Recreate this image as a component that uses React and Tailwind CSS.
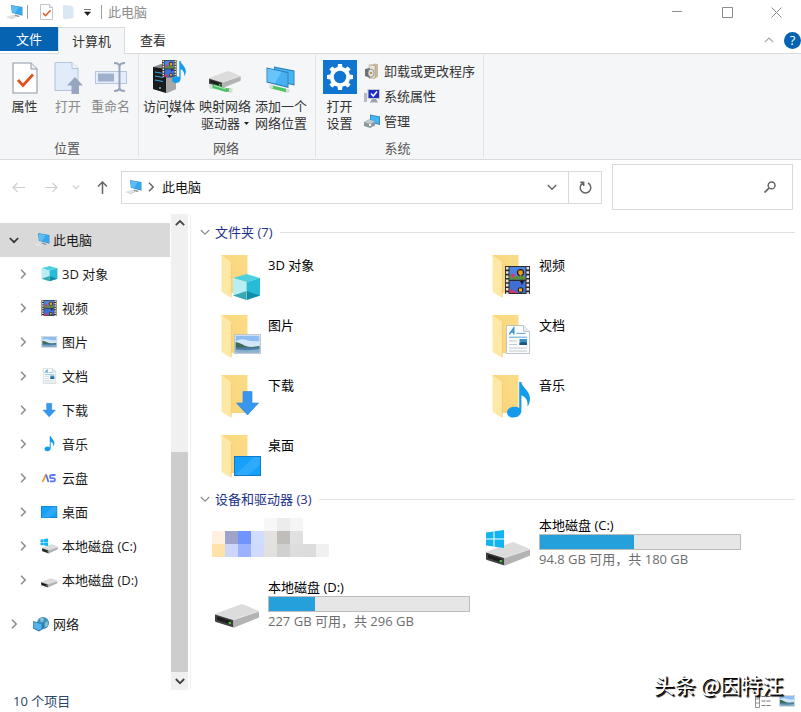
import React from 'react';

/* ---------- small glyphs ---------- */

const Chevron = ({ d, color = '#8a8a8a', width = 1.5 }) => (
  <svg className="w-2.5 h-2.5 shrink-0" viewBox="0 0 10 10" fill="none" stroke={color} strokeWidth={width}>
    <path d={d} />
  </svg>
);

const RIGHT = 'M3 .8L7.2 5L3 9.2';
const DOWN = 'M.8 3L5 7.2L9.2 3';
const UP = 'M.8 7.2L5 3L9.2 7.2';

const Caret = () => (
  <svg className="w-[5px] h-[3px] shrink-0" viewBox="0 0 5 3">
    <path d="M0 0h5L2.5 3z" fill="#222" />
  </svg>
);

/* ---------- icons ---------- */

const ComputerIcon = ({ className }) => (
  <svg className={className} viewBox="0 0 18 16">
    <path d="M5 1l11.500 2v8.800L5.800 8.800z" fill="#4a8dbd" />
    <path d="M5.600 1.800l10.300 1.800v7.200L6.300 8.200z" fill="#35a9ef" />
    <path d="M5.600 1.800l7 1.200-3.500 5.900-2.800-.7z" fill="#5cbdf7" />
    <path d="M9 10.600l5 1.300-1.800 1-3.800-1z" fill="#7f95a8" />
    <path d="M0 13l6.500-2 5 1.600L6 15.200z" fill="#d3d7da" />
    <path d="M2 13.200l5-1.400M4 14l5-1.600" stroke="#f4f5f6" strokeWidth=".5" />
  </svg>
);

const CubeShape = () => (
  <>
    <path d="M0 4L13.500 0L27 4L13.500 8z" fill="#4fd0de" />
    <path d="M0 4L13.500 8V26L0 21.500z" fill="#b9eff3" />
    <path d="M27 4L13.500 8V26L27 21.500z" fill="#27bbd8" />
    <path d="M0 21.500L13.500 17V26z" fill="#3aa9b4" />
    <path d="M27 21.500L13.500 17V26z" fill="#128da6" />
    <path d="M13.500 8V26" stroke="#8fe3ea" strokeWidth=".6" />
  </>
);

const FilmShape = () => (
  <>
    <rect width="25" height="28" fill="#2e2a2a" />
    <path d="M2.2 1v27M22.8 1v27" stroke="#e8e4dc" strokeWidth="2.6" strokeDasharray="2.6 1.6" />
    <rect x="4.5" y="1" width="16" height="12.5" fill="#4f83e2" />
    <rect x="4.5" y="15" width="16" height="12" fill="#3f6fd4" />
    <path d="M4.5 13.5V9l3-1 3 3 4-2 6 2v2.5z" fill="#5f8f34" />
    <circle cx="15.5" cy="6.5" r="3.6" fill="#241a14" />
    <path d="M13.5 4.5h4l.4 3-2.3 2.5-2.3-2.5z" fill="#f2a11c" />
    <circle cx="8" cy="9.5" r="1.9" fill="#d6377c" />
    <path d="M15 15h4l-2 4z" fill="#1a1a24" />
    <path d="M4.5 27v-4l5 1.6 3 2.4z" fill="#c93a72" />
    <circle cx="15.5" cy="24" r="2.8" fill="#2b2018" />
    <path d="M14 22.5h3v3h-3z" fill="#f3b626" />
  </>
);

const PictureShape = () => (
  <>
    <rect x=".4" y=".4" width="26.2" height="19.2" fill="#f4f6f8" stroke="#b5bcc4" strokeWidth=".8" />
    <rect x="1.6" y="1.6" width="23.8" height="16.8" fill="#8dbdf1" />
    <path d="M1.6 7q6-3 11-1t12.8 1v6H1.6z" fill="#d3e7f8" />
    <path d="M1.6 8q4 .5 7 2.500t9 2.500l7.800-1v2.4H1.6z" fill="#3d6b57" />
    <path d="M1.6 13.5h23.8v4.9H1.6z" fill="#4b7fa9" />
    <path d="M1.6 15.5q12 1.6 23.8-.5v3.4H1.6z" fill="#8ab3cb" />
  </>
);

const DocShape = () => (
  <>
    <path d="M.5 .5h17l6 6v22H.5z" fill="#fbfcfd" stroke="#b7bdc3" strokeWidth=".9" />
    <path d="M17.5 .5v6h6" fill="#e6ebef" stroke="#b7bdc3" strokeWidth=".8" />
    <path d="M3.2 9.4L7.8 3v6.4M5 7h3" fill="none" stroke="#2e8fc4" strokeWidth="1.3" />
    <path d="M10.5 8.4h9M3 12.2h18" stroke="#5aa9d2" strokeWidth="1" />
    <path d="M3 16h8M3 19.5h8M3 23h18M3 26h18" stroke="#b9c4cc" strokeWidth=".9" />
    <rect x="13.5" y="14" width="7.5" height="6" fill="#3a91c5" />
    <path d="M13.5 18q4-2 7.5 0v2h-7.5z" fill="#1f567a" />
  </>
);

const ArrowShape = () => (
  <path d="M7 .5h9V12h6.5L11.5 24L.5 12H7z" fill="#3797ee" stroke="#2b80cf" strokeWidth=".6" />
);

const NoteShape = () => (
  <path
    d="M12.2 0h2.2c.4 5 8.6 9 8.6 16.5 0 3.2-1 6-2.6 8.2.8-5.6-1.2-9.6-6-11.4V28.500c0 4.200-3.600 7-8 7S0 33.200 0 30.300s3-5.600 7.200-5.600c2 0 3.800.5 5 1.300z"
    fill="#149bec"
  />
);

const DesktopShape = () => (
  <>
    <rect width="27" height="20" fill="#1179c8" />
    <rect x="1" y="1" width="25" height="18" fill="#15a0fa" />
    <path d="M1 19L20 1h6v8L14 19z" fill="#3db0fb" opacity=".6" />
  </>
);

const DriveShape = () => (
  <>
    <path d="M1 10.500Q0 10 1 9.500L25.500 .5Q27 0 28.500 .5L43 6.500Q44.500 7.200 43 8L19 16z" fill="#dcdcdc" />
    <path d="M0 10l18.500 5.700v7.800L1 18Q0 17.600 0 16.500z" fill="#404040" />
    <path d="M2 12.500l14 4.600v3.400L2 16z" fill="#1d1d1d" />
    <path d="M18.500 15.700L44 7.200V12.500Q44 13.500 43 14L20 23.300Q19 23.800 18.500 23.500z" fill="#b3b3b3" />
    <path d="M0 10l18.500 5.700L44 7.200" fill="none" stroke="#ededed" strokeWidth=".8" />
    <circle cx="14.800" cy="19" r="1.200" fill="#3fd34c" />
  </>
);

const WindowsShape = () => (
  <path d="M0 2.500l7.500-1V8.500H0zM8.500 1.300L18 0v8.500H8.500zM0 9.500h7.500v7l-7.500-1zM8.500 9.500H18V18l-9.500-1.300z" fill="#10b4f1" />
);

const Folder = ({ children }) => (
  <svg className="w-[47px] h-[46px] shrink-0" viewBox="0 0 47 46">
    <defs>
      <linearGradient id="folderBack" x1="0" y1="1" x2="1" y2="0">
        <stop offset="0" stopColor="#f6d377" />
        <stop offset="1" stopColor="#fbdc87" />
      </linearGradient>
    </defs>
    <path d="M7.500 1H33.500V39H14z" fill="url(#folderBack)" />
    <path d="M7.500 1L16.300 7.500Q17.300 8.300 17.300 10V44L8.500 38.500Q7.500 37.800 7.500 36.500z" fill="#fee8a6" />
    <path d="M17.300 10V43" stroke="#e9c768" strokeWidth=".6" />
    {children}
  </svg>
);

const PropertiesIcon = ({ className }) => (
  <svg className={className} viewBox="0 0 26 32">
    <path d="M1 1h18l6 6v24H1z" fill="#fff" stroke="#8d99a8" strokeWidth="1.100" />
    <path d="M19 1v6h6" fill="#eef1f5" stroke="#8d99a8" strokeWidth="1" />
    <path d="M6 18l5 5.500L21 12.500" fill="none" stroke="#e0521d" strokeWidth="2.800" />
  </svg>
);

const OpenIcon = () => (
  <svg className="w-[30px] h-[34px]" viewBox="0 0 30 34">
    <path d="M2 2.500h17l6 6v22H2z" fill="#e1ebf9" stroke="#b4c3da" />
    <path d="M19 2.500v6h6" fill="#f2f6fb" stroke="#b4c3da" />
    <path d="M22 17L30 25.500H26V34h-7.500v-8.500h-4.500z" fill="#98a5c0" />
  </svg>
);

const RenameIcon = () => (
  <svg className="w-8 h-[34px]" viewBox="0 0 32 34">
    <rect x=".5" y="11.500" width="31" height="12" fill="#e4edf9" stroke="#b7c6dd" />
    <rect x="3" y="13.500" width="16" height="8" fill="#a0afcd" />
    <path d="M19 3q5 0 5.500 3 .5-3 5.500-3M24.500 5.500v23M19 31q5 0 5.500-3 .5 3 5.500 3" fill="none" stroke="#97a3ba" strokeWidth="2" />
  </svg>
);

const MediaIcon = () => (
  <svg className="w-[34px] h-[34px]" viewBox="0 0 34 34">
    <path d="M1 7l8-3h15v25l-9 4-14-4z" fill="#8b8d90" />
    <path d="M1 7l13 2v24L1 29z" fill="#191b1e" />
    <path d="M14 9l10-4v24l-10 4z" fill="#a6a8aa" />
    <path d="M3 12l8 1.500M3 16l8 1.500M3 20l8 1.500" stroke="#3aa4dc" strokeWidth="1.200" />
    <circle cx="8" cy="28" r="1" fill="#4cc4f5" />
    <g transform="translate(10 0) scale(.58 .62)"><FilmShape /></g>
    <g transform="translate(20 1) scale(.6 .62)"><NoteShape /></g>
  </svg>
);

const MapDriveIcon = () => (
  <svg className="w-[34px] h-[34px]" viewBox="0 0 34 34">
    <g transform="translate(1 11) scale(.72)"><DriveShape /></g>
    <path d="M2 25l4-.5 12 3.500 5 .5v3l-5 .5L6 28.500l-4-.5z" fill="#4cc163" />
    <path d="M6 25.500l12 3.500" stroke="#a4e6ae" strokeWidth="1.200" />
    <path d="M1.500 24.500h3v4h-3zM21 28.500h3.500v4H21z" fill="#d5dbd6" />
  </svg>
);

const AddPlaceIcon = () => (
  <svg className="w-[34px] h-[34px]" viewBox="0 0 34 34">
    <path d="M10 6.500l20.500 4v15L10 21z" fill="#2a7fba" />
    <path d="M11 7.800l18.600 3.600v12.800L11 20z" fill="#47b4f3" />
    <path d="M2.500 7.500l22 4.500v16l-22-5.500z" fill="#2f82ba" />
    <path d="M3.500 8.800l20 4.100v13.700l-20-5z" fill="#46b0f3" />
    <path d="M3.500 8.800l14 2.900-6.500 11.800-7.500-1.900z" fill="#69c5f8" />
    <path d="M7 25l16 4v3.500L7 28.500z" fill="#4dc763" />
    <path d="M5.500 24.500H9v4H5.500zM22 29h3.500v3.500H22z" fill="#d5dbd6" />
  </svg>
);

const SettingsIcon = () => (
  <svg className="w-[34px] h-[34px] bg-[#0f75d1]" viewBox="0 0 34 34">
    <g transform="translate(17 17)">
      <circle r="8.200" fill="none" stroke="#fff" strokeWidth="4" />
      {[0, 45, 90, 135, 180, 225, 270, 315].map((angle) => (
        <path key={angle} transform={`rotate(${angle})`} d="M-2.500 -9.500L-2 -13h4l.5 3.500z" fill="#fff" />
      ))}
    </g>
  </svg>
);

const UninstallIcon = () => (
  <svg className="w-4 h-4" viewBox="0 0 16 16">
    <path d="M5 2l7-1.500 2 1v12l-3 2H5z" fill="#c9b8a0" />
    <path d="M5 2l6 .5V15H5z" fill="#eee5d5" stroke="#a08f78" strokeWidth=".5" />
    <path d="M1 6l5-1v10l-5-2z" fill="#6e7276" />
    <ellipse cx="7" cy="10" rx="3" ry="4" fill="#e3e7ea" stroke="#777" strokeWidth=".7" />
    <circle cx="7" cy="10" r="1.200" fill="#c29033" />
  </svg>
);

const SystemIcon = () => (
  <svg className="w-4 h-4" viewBox="0 0 16 16">
    <path d="M0 5h3v9H0z" fill="#b6bcc6" />
    <rect x="3.500" y="1" width="12.500" height="10" fill="#c6cdd9" />
    <rect x="4.500" y="2" width="10.500" height="8" fill="#1c2fc0" />
    <path d="M7 5.500l2.300 2.500L13 3.500" fill="none" stroke="#fff" strokeWidth="1.500" />
    <path d="M8 11h4l2 3.500H6z" fill="#9ba3b0" />
  </svg>
);

const ManageIcon = () => (
  <svg className="w-4 h-4" viewBox="0 0 16 16">
    <path d="M6 1.500l10 2v8.500L6 9.500z" fill="#3982b8" />
    <path d="M6.800 2.500l8.400 1.700v6.600L6.800 8.800z" fill="#40b6f5" />
    <path d="M0 9l5-2.500 6 2v4L6 15l-6-2z" fill="#8e999f" />
    <path d="M0 9l5-2.500 6 2L6 11z" fill="#c1cacd" />
    <path d="M5 11h2v2H5z" fill="#f0f3f4" />
  </svg>
);

const NetworkIcon = () => (
  <svg className="w-[18px] h-4" viewBox="0 0 18 16">
    <circle cx="11" cy="7" r="6" fill="#3f93bd" />
    <path d="M8 2.500l3-1 1 3-3 2zM13 7l3-2-.5 5-2.500 1z" fill="#8cc5cf" />
    <path d="M1 5l9 2.500 2-1v6L7 15.500l-6-3z" fill="#2b7fc0" />
    <path d="M1.500 6l8 2.200v5L6.500 14l-5-2.500z" fill="#55b4ea" />
  </svg>
);

const CloudIcon = () => (
  <svg className="w-[18px] h-4" viewBox="0 0 18 16" fill="none" strokeWidth="1.800">
    <path d="M2.500 12L6 4.500" stroke="#f0a53c" />
    <path d="M6 4.500L8.500 12" stroke="#5a6ff0" />
    <path d="M15.500 5H12Q10 5 10 6.700T12 8.200H13.500Q15 8.200 15 9.800T13.500 11.300H10" stroke="#5a78f5" />
  </svg>
);

/* Fits one of the large shapes into a tree row */
const TreeIcon = ({ transform, children }) => (
  <svg className="w-[18px] h-4" viewBox="0 0 18 16">
    <g transform={transform}>{children}</g>
  </svg>
);

/* ---------- data ---------- */

const treeItems = [
  { label: '3D 对象', icon: <TreeIcon transform="translate(1.500 0) scale(.59)"><CubeShape /></TreeIcon> },
  { label: '视频', icon: <TreeIcon transform="translate(1.500 0) scale(.6 .57)"><FilmShape /></TreeIcon> },
  { label: '图片', icon: <TreeIcon transform="translate(1.500 2) scale(.58)"><PictureShape /></TreeIcon> },
  { label: '文档', icon: <TreeIcon transform="translate(3 0) scale(.54)"><DocShape /></TreeIcon> },
  { label: '下载', icon: <TreeIcon transform="translate(2.500 1) scale(.58)"><ArrowShape /></TreeIcon> },
  { label: '音乐', icon: <TreeIcon transform="translate(4.500 0) scale(.43)"><NoteShape /></TreeIcon> },
  { label: '云盘', icon: <CloudIcon /> },
  { label: '桌面', icon: <TreeIcon transform="translate(1 2) scale(.6)"><DesktopShape /></TreeIcon> },
  {
    label: '本地磁盘 (C:)',
    icon: (
      <svg className="w-[18px] h-4" viewBox="0 0 18 16">
        <g transform="translate(2 6) scale(.36 .4)"><DriveShape /></g>
        <g transform="translate(.5 .5) scale(.42)"><WindowsShape /></g>
      </svg>
    ),
  },
  { label: '本地磁盘 (D:)', icon: <TreeIcon transform="translate(1 6) scale(.37 .4)"><DriveShape /></TreeIcon> },
];

const folders = [
  { label: '3D 对象', art: <g transform="translate(19 20)"><CubeShape /></g> },
  { label: '视频', art: <g transform="translate(20 12)"><FilmShape /></g> },
  { label: '图片', art: <g transform="translate(20 20)"><PictureShape /></g> },
  { label: '文档', art: <g transform="translate(21 11)"><DocShape /></g> },
  { label: '下载', art: <g transform="translate(22 17)"><ArrowShape /></g> },
  { label: '音乐', art: <g transform="translate(22 8)"><NoteShape /></g> },
  { label: '桌面', art: <g transform="translate(20 22)"><DesktopShape /></g> },
];

const drives = [
  { label: '本地磁盘 (C:)', used: 47, info: '94.8 GB 可用，共 180 GB', system: true },
  { label: '本地磁盘 (D:)', used: 23, info: '227 GB 可用，共 296 GB', system: false },
];

// Blurred-out device: [column, row, colour]
const mosaic = [
  [4, 0, '#f7f7f7'], [5, 0, '#ececec'], [6, 0, '#f5f5f5'],
  [0, 1, '#fff0e2'], [1, 1, '#9fa3cc'], [2, 1, '#7094fd'], [3, 1, '#d1ddff'], [4, 1, '#e3e2df'], [5, 1, '#c1bdba'], [6, 1, '#e0e0e1'],
  [0, 2, '#ffe1aa'], [1, 2, '#cdd6fa'], [2, 2, '#9db2ff'], [3, 2, '#d0dafc'], [4, 2, '#e3e1de'], [5, 2, '#d0d0d0'], [6, 2, '#dddddd'], [7, 2, '#dcdcdc'], [8, 2, '#f0f0f0'],
];

/* ---------- parts ---------- */

const TitleBar = () => (
  <header className="flex items-center h-[27px] pb-[3px] pl-1.5 text-[#8c8c8c]">
    <ComputerIcon className="w-[18px] h-4" />
    <span className="w-px h-3.5 bg-gray-400 ml-[3px]" />
    <button aria-label="属性" className="ml-3"><PropertiesIcon className="w-[13px] h-4" /></button>
    <button aria-label="新建文件夹" className="ml-2.5">
      <svg className="w-[11px] h-4" viewBox="0 0 11 16">
        <path d="M0 1l8 .5 2.500 2V14L2 15.500 0 14z" fill="#dce7f4" />
      </svg>
    </button>
    <button aria-label="自定义快速访问工具栏" className="ml-2.5">
      <svg className="w-[7px] h-[7px]" viewBox="0 0 7 7"><path d="M0 .5h7M.5 3h6l-3 3.500z" fill="#222" stroke="#222" strokeWidth=".6" /></svg>
    </button>
    <span className="w-px h-3.5 bg-gray-400 ml-2.5" />
    <h1 className="ml-1.5">此电脑</h1>
    <div className="ml-auto flex items-center">
      <button aria-label="最小化" className="w-[50px] flex justify-center">
        <svg className="w-2.5 h-2.5" viewBox="0 0 10 10" stroke="#8c8c8c"><path d="M0 4.500h10" /></svg>
      </button>
      <button aria-label="最大化" className="w-[50px] flex justify-center">
        <svg className="w-[11px] h-[11px]" viewBox="0 0 11 11" fill="none" stroke="#8c8c8c"><path d="M.5 .5h10v10H.5z" /></svg>
      </button>
      <button aria-label="关闭" className="w-[49px] flex justify-center">
        <svg className="w-[11px] h-[11px]" viewBox="0 0 11 11" stroke="#8c8c8c"><path d="M.5 .5l10 10M10.500 .5l-10 10" /></svg>
      </button>
    </div>
  </header>
);

const RibbonTabs = () => (
  <nav className="flex h-[27px] border-b border-[#dadbdc] text-[#333]">
    <button className="w-[58px] h-6 bg-[#0563b1] text-white">文件</button>
    <button className="w-[67px] h-[27px] bg-[#f5f6f7] border border-b-0 border-[#dadbdc]">计算机</button>
    <button className="w-14">查看</button>
    <div className="ml-auto flex items-center gap-2.5">
      <button aria-label="折叠功能区"><Chevron d={UP} color="#a3a3a3" width={1.2} /></button>
      <button className="w-[17px] h-[17px] rounded-full bg-[#0563b1] text-white leading-4">?</button>
    </div>
  </nav>
);

const RibbonButton = ({ icon, lines, disabled, caret, className }) => (
  <button disabled={disabled} className={`flex flex-col items-center leading-[17px] whitespace-nowrap ${disabled ? 'text-[#8b8b8b]' : ''} ${className}`}>
    <span className="h-9 mb-0.5">{icon}</span>
    {lines.map((line, i) => (
      <span key={line} className="flex items-center gap-1">
        {line}
        {caret === 'side' && i === lines.length - 1 && <Caret />}
      </span>
    ))}
    {caret === 'below' && <Caret />}
  </button>
);

const RibbonGroup = ({ title, className, children }) => (
  <section className={`flex flex-col border-r border-[#e2e3e4] ${className}`}>
    <div className="flex flex-1 items-start pt-1.5">{children}</div>
    <h2 className="text-center text-[#555] leading-[18px] pr-1">{title}</h2>
  </section>
);

const Ribbon = () => (
  <div className="flex h-[106px] bg-[#f5f6f7] border-b border-[#dadbdc] text-[#333] pb-0.5">
    <RibbonGroup title="位置" className="w-[139px]">
      <RibbonButton icon={<PropertiesIcon className="w-[26px] h-8 mt-0.5" />} lines={['属性']} className="w-[49px]" />
      <RibbonButton icon={<OpenIcon />} lines={['打开']} disabled className="w-[38px]" />
      <RibbonButton icon={<RenameIcon />} lines={['重命名']} disabled className="w-[47px]" />
    </RibbonGroup>
    <RibbonGroup title="网络" className="w-[177px] pl-0.5">
      <RibbonButton icon={<MediaIcon />} lines={['访问媒体']} caret="below" className="w-[56px]" />
      <RibbonButton icon={<MapDriveIcon />} lines={['映射网络', '驱动器']} caret="side" className="w-[56px]" />
      <RibbonButton icon={<AddPlaceIcon />} lines={['添加一个', '网络位置']} className="w-[56px]" />
    </RibbonGroup>
    <RibbonGroup title="系统" className="w-[168px]">
      <RibbonButton icon={<SettingsIcon />} lines={['打开', '设置']} className="w-[47px]" />
      <div className="flex flex-col items-start gap-[7px] leading-[18px] pt-0.5 pl-px">
        <button className="flex items-center gap-1"><UninstallIcon />卸载或更改程序</button>
        <button className="flex items-center gap-1"><SystemIcon />系统属性</button>
        <button className="flex items-center gap-1"><ManageIcon />管理</button>
      </div>
    </RibbonGroup>
  </div>
);

const AddressRow = () => (
  <div className="flex items-center h-[54px] pl-3 pr-2">
    <button aria-label="后退">
      <svg className="w-[13px] h-[13px]" viewBox="0 0 13 13" fill="none" stroke="#cfcfcf" strokeWidth="1.200"><path d="M13 6.500H1M5.500 2L1 6.500 5.500 11" /></svg>
    </button>
    <button aria-label="前进" className="ml-5">
      <svg className="w-[13px] h-[13px]" viewBox="0 0 13 13" fill="none" stroke="#cfcfcf" strokeWidth="1.200"><path d="M0 6.500h12M7.500 2L12 6.500 7.500 11" /></svg>
    </button>
    <button aria-label="最近位置" className="ml-3.5">
      <svg className="w-2 h-2" viewBox="0 0 10 10" fill="none" stroke="#cfcfcf" strokeWidth="1.500"><path d={DOWN} /></svg>
    </button>
    <button aria-label="向上" className="ml-4">
      <svg className="w-[13px] h-[13px]" viewBox="0 0 13 13" fill="none" stroke="#666" strokeWidth="1.500"><path d="M6.500 13V1M2 5.500L6.500 1 11 5.500" /></svg>
    </button>
    <div className="ml-3 flex-1 h-[33px] flex items-center border border-[#d9d9d9] pl-[3px]">
      <ComputerIcon className="w-[18px] h-4" />
      <span className="ml-[3px]"><Chevron d={RIGHT} color="#666" /></span>
      <span className="ml-1.5 text-[#111]">此电脑</span>
      <button aria-label="展开地址" className="ml-auto mr-[11px]"><Chevron d={DOWN} color="#666" /></button>
      <button aria-label="刷新" className="w-[33px] h-full border-l border-[#d9d9d9] flex items-center justify-center">
        <svg className="w-[13px] h-[13px]" viewBox="0 0 13 13" fill="none" stroke="#666" strokeWidth="1.500">
          <path d="M9 2A5.300 5.300 0 1 1 4 2M1.200 1.300H4.700V5" />
        </svg>
      </button>
    </div>
    <div className="ml-2.5 w-[181px] h-[46px] flex items-center border border-[#d9d9d9] pr-4">
      <input type="text" aria-label="搜索此电脑" className="flex-1 min-w-0 h-full px-2 outline-none" />
      <svg className="w-3 h-3" viewBox="0 0 12 12" fill="none" stroke="#666" strokeWidth="1.500">
        <circle cx="7.600" cy="4.400" r="3.400" />
        <path d="M5.200 6.800L.5 11.500" strokeWidth="1.800" />
      </svg>
    </div>
  </div>
);

const Sidebar = () => (
  <aside className="flex w-[191px] border-r border-[#f0f0f0] text-[#1a1a1a]">
    <ul className="w-[170px] pt-[9px]">
      <li>
        <button className="flex items-center w-full h-[34px] pl-[9px] bg-[#d9d9d9]">
          <Chevron d={DOWN} color="#333" width={1.7} />
          <ComputerIcon className="w-[18px] h-4 ml-3.5 mr-0.5" />
          此电脑
        </button>
        <ul>
          {treeItems.map((item) => (
            <li key={item.label}>
              <button className="flex items-center w-full h-[34px] pl-[18px]">
                <Chevron d={RIGHT} />
                <span className="ml-3 mr-1">{item.icon}</span>
                {item.label}
              </button>
            </li>
          ))}
        </ul>
      </li>
      <li>
        <button className="flex items-center w-full h-[34px] pl-[9px] mt-2.5">
          <Chevron d={RIGHT} />
          <span className="ml-[13px] mr-[3px]"><NetworkIcon /></span>
          网络
        </button>
      </li>
    </ul>
    <div className="flex flex-col w-[17px] ml-px bg-[#f0f0f0]">
      <button aria-label="向上滚动" className="h-[18px] flex items-center justify-center"><Chevron d={UP} color="#444" width={1.8} /></button>
      <div className="flex-1 flex flex-col justify-end">
        <div className="h-1/2 bg-[#cdcdcd]" />
      </div>
      <button aria-label="向下滚动" className="h-[18px] flex items-center justify-center"><Chevron d={DOWN} color="#444" width={1.8} /></button>
    </div>
  </aside>
);

const SectionHeader = ({ children }) => (
  <div className="flex items-center h-[18px] pr-1.5">
    <button className="flex items-center gap-[5px] text-[#1e3287]">
      <Chevron d={DOWN} width={1.1} />
      {children}
    </button>
    <span className="flex-1 h-px bg-[#e2e2e2] ml-2" />
  </div>
);

const DriveTile = ({ drive }) => (
  <div className="flex h-[62px] pt-2 gap-2">
    <svg className="w-[46px] h-[50px] shrink-0" viewBox="0 0 46 50">
      <g transform="translate(1 26)"><DriveShape /></g>
      {drive.system && <g transform="translate(1 14)"><WindowsShape /></g>}
    </svg>
    <div className="w-[202px] leading-[18px]">
      <p>{drive.label}</p>
      <div className="h-4 bg-[#e6e6e6] border border-[#bcbcbc]">
        <div className="h-full bg-[#26a0da]" style={{ width: `${drive.used}%` }} />
      </div>
      <p className="text-[#6d6d6d]">{drive.info}</p>
    </div>
  </div>
);

const Content = () => (
  <main className="flex-1 min-w-0 pt-[9px] pl-[9px] text-black">
    <SectionHeader>文件夹 (7)</SectionHeader>
    <div className="grid grid-cols-[repeat(auto-fill,271px)] pl-3.5 pt-1.5 pb-[3px]">
      {folders.map((folder) => (
        <div key={folder.label} className="flex h-[60px] pt-[7px] gap-[7px]">
          <Folder>{folder.art}</Folder>
          <span className="leading-[18px] pt-0.5">{folder.label}</span>
        </div>
      ))}
    </div>
    <SectionHeader>设备和驱动器 (3)</SectionHeader>
    <div className="grid grid-cols-[repeat(auto-fill,271px)] pl-3.5">
      <svg className="w-[117px] h-[39px] mt-2.5 -ml-0.5" viewBox="0 0 117 39" shapeRendering="crispEdges">
        {mosaic.map(([col, row, color]) => (
          <rect key={`${col}-${row}`} x={col * 13} y={row * 13} width="13" height="13" fill={color} />
        ))}
      </svg>
      {drives.map((drive) => (
        <DriveTile key={drive.label} drive={drive} />
      ))}
    </div>
  </main>
);

const StatusBar = () => (
  <footer className="flex items-center h-[22px] pl-[13px] pr-1.5 text-[#2a4468]">
    <span>10 个项目</span>
    <div className="ml-auto flex items-center gap-2">
      <button aria-label="详细信息">
        <svg className="w-4 h-[14px]" viewBox="0 0 16 14" fill="none" stroke="#777">
          <path d="M.5 .5h4v13h-4zM.5 5h4M.5 9h4" strokeWidth=".8" />
          <path d="M6.500 2.500h9M6.500 7h9M6.500 11.500h9" strokeDasharray="4 1" />
        </svg>
      </button>
      <button aria-label="大图标">
        <svg className="w-4 h-3" viewBox="0 0 27 20"><PictureShape /></svg>
      </button>
    </div>
  </footer>
);

export default function App() {
  return (
    <div className="relative min-h-screen flex flex-col bg-white text-[13px] leading-[18px] font-['Open_Sans','Noto_Sans_CJK_SC',sans-serif]">
      <TitleBar />
      <RibbonTabs />
      <Ribbon />
      <AddressRow />
      <div className="flex flex-1">
        <Sidebar />
        <Content />
      </div>
      <StatusBar />
      <p className="absolute right-[18px] bottom-3.5 text-[21px] leading-7 text-white font-['Noto_Sans_CJK_SC',sans-serif] [text-shadow:1px_1px_0_#000,2px_2px_1px_#000]">头条 @因特汪</p>
    </div>
  );
}
